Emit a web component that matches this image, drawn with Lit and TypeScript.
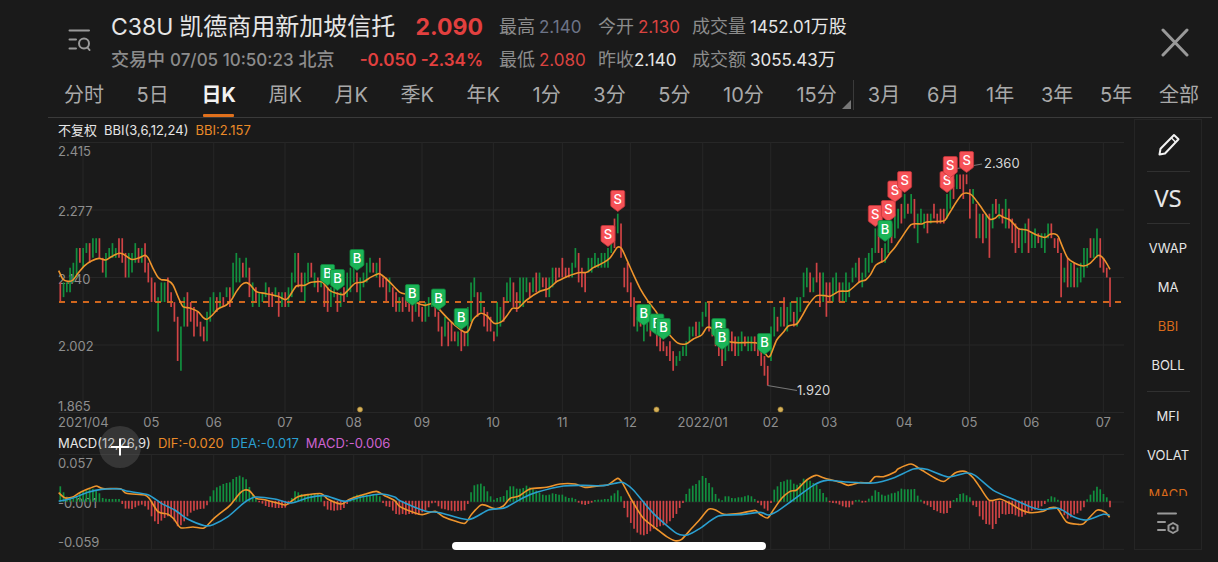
import { LitElement, html, svg, css } from "lit";
import { customElement, state } from "lit/decorators.js";

type Point = [number, number];

/* ---------- chart geometry ---------- */
const FIRST_X = 60.3;
const STEP = 3.26;
const barX = (i: number) => FIRST_X + STEP * i;
/* prices are stored in cents above 2.00 */
const priceY = (cents: number) => 277.5 + (14 - cents) * 4.91;
const MACD_ZERO = 501.3;

/* g = up, r = down; high,low in cents above 2.00 */
const CANDLES = `
r13,9 g13,10 g13,11 g16,11 g17,13 g20,14 r20,17 g20,16 g21,19 r21,17 g22,18 g22,19 r22,18 r18,15 g19,14 g20,18
g21,18 g20,18 r22,18 r22,17 r19,14 g19,14 g19,15 g21,17 r20,17 g20,17 r21,15 r17,13 r14,9 r13,9 g10,3 g13,9
g13,9 r14,9 r11,8 r9,5 r6,-3 g4,-5 g10,4 r11,4 r9,5 r8,2 r7,4 r5,2 r4,1 g7,1 g10,5 g11,7 r10,7 g11,8 r10,8
g12,10 r12,8 g17,10 g19,13 g18,13 r17,14 g18,14 r16,10 g13,8 r12,9 g11,8 g11,9 g13,10 r12,8 r11,8 g12,10 r11,6
g11,8 r11,8 g12,8 g15,10 g19,13 r19,12 r15,11 g15,9 g17,13 r17,14 g15,12 r14,11 g14,12 r13,8 r12,7 g12,8 g12,10
r11,7 g11,8 r12,9 g15,10 g16,11 g17,13 r15,11 g14,9 g15,12 g17,13 g18,15 r17,15 g17,14 r18,12 r14,12 r14,9
g14,11 r12,8 r11,7 g10,7 r10,7 r11,8 r10,7 r9,5 g9,7 r9,6 r8,5 g9,5 g10,6 g11,8 r9,6 r7,3 r4,0 g6,2 r5,0 r5,1
r3,1 g3,0 r4,-1 r3,0 g8,0 g13,5 g14,10 r11,6 g11,7 r8,4 r7,3 r6,3 r3,1 g9,2 g8,4 r10,5 g13,9 g14,9 r13,8 r11,7
g14,8 g14,8 g14,11 r13,10 g14,11 r15,11 g15,11 r14,12 r14,10 g14,10 g16,12 r16,13 r16,14 r18,14 r16,14 r16,14
g17,14 g20,16 r19,13 r16,12 r15,11 g18,15 g18,15 g19,16 g18,16 g19,16 g19,16 g20,16 g21,19 r26,20 g27,23 r25,18
r16,12 r17,11 r13,8 r10,4 g6,3 r6,4 g5,1 g5,3 r6,2 r5,3 r3,0 r2,-1 r1,-1 r0,-2 r1,-3 r-1,-5 g-2,-4 g-1,-3 g0,-2
g1,-2 g4,1 g4,2 r5,2 g5,2 g7,4 g9,6 r9,3 r4,2 r3,0 r2,-2 r0,-4 g0,-3 g3,-1 r3,-1 r2,-2 g2,-2 g3,-1 r2,0 g2,-1
g2,-1 r2,-1 r1,-2 r0,-4 r-2,-6 r-4,-8 g4,-3 g8,2 r6,3 g8,4 r10,4 g8,3 g9,5 r7,4 g10,4 g10,7 g15,10 g16,12 r15,11
g14,11 r17,13 r15,8 g15,9 r13,6 r13,9 g14,9 g15,11 r13,9 g13,9 g15,9 g13,10 g16,13 g17,14 r18,13 g15,12 g18,14
g19,15 g20,17 g24,19 r24,19 r20,17 g21,17 g23,19 r25,21 g27,22 g28,24 r29,25 g31,26 r29,27 g31,27 r30,24 g27,21
g28,25 g27,24 r27,23 g27,25 r29,26 r27,25 r28,25 r28,25 g31,26 g32,28 r34,30 g35,32 r35,32 r35,30 r35,33 r32,26
g32,29 r29,22 g27,22 r27,21 g27,22 r27,18 g29,24 r30,27 g29,26 r28,25 g30,24 r28,24 r26,21 r25,19 r24,20 g24,19
g25,21 r26,19 g23,20 g24,20 r23,21 g23,20 g23,19 g25,22 r25,22 r22,20 r22,19 r19,10 g16,13 r18,12 g17,12 r17,12
g16,12 g17,13 g20,14 g20,16 r22,18 g22,18 g24,18 r22,16 r18,15 r16,14 r14,8`
  .trim().split(/\s+/)
  .map((s) => {
    const [high, low] = s.slice(1).split(",").map(Number);
    return { up: s[0] === "g", high, low };
  });

/* MACD histogram, in thirds of a pixel */
const HISTOGRAM = `
45 27 14 10 12 16 24 30 33 36 38 33 24 10 8 7 7 7 7 -8 -22 -22 -23 -18 -13 -10 -15 -25 -45 -60 -68 -58 -50 -45 -48
-60 -75 -72 -60 -45 -34 -28 -25 -23 -22 -12 15 33 42 47 52 55 57 67 73 77 72 66 43 20 8 -3 -7 -14 -17 -18 -20 -20
-20 -19 -10 10 30 27 22 20 22 22 24 24 15 -15 -25 -27 -28 -27 -26 -20 -8 7 15 20 20 22 20 19 22 20 15 -5 -15 -17
-28 -38 -40 -38 -40 -38 -38 -40 -41 -33 -28 -18 -6 -4 -15 -22 -24 -27 -28 -30 -29 -28 -27 -8 27 48 51 53 45 30 15
5 10 13 16 33 45 45 38 38 40 47 42 36 32 26 20 18 20 24 22 20 20 14 10 11 7 -4 -9 -11 -8 -4 4 5 5 7 7 17 24 33 15
-20 -48 -65 -82 -94 -100 -102 -98 -90 -82 -78 -75 -72 -67 -60 -50 -38 -20 -5 22 38 47 52 63 76 70 55 42 22 8 3 15
15 10 9 12 12 15 18 15 7 -4 -12 -22 -28 -5 35 45 58 60 65 65 53 50 55 68 65 62 55 50 37 25 12 -3 -5 -6 -10 -15 -18
-18 -10 4 5 -4 -3 8 17 33 28 20 17 20 24 26 30 38 36 36 36 37 17 5 -7 -12 -17 -26 -30 -35 -37 -35 -20 4 10 22 24
18 12 -12 -17 -45 -55 -68 -70 -83 -68 -50 -38 -40 -38 -38 -42 -46 -46 -40 -35 -28 -25 -20 -15 -8 7 15 12 5 -28 -42
-52 -48 -40 -36 -28 -18 6 20 32 44 36 22 12 -18`
  .trim().split(/\s+/).map(Number);

/* A stretch of a curve: an origin, then points in thirds of a pixel from it */
const stretch = (ox: number, oy: number, data: string): Point[] =>
  data.trim().split(/\s+/).map((p) => {
    const [x, y] = p.split(",").map(Number);
    return [ox + x / 3, oy + y / 3] as Point;
  });

const BBI: Point[] = [
  ...stretch(48, 220, `32,152 45,178 60,184 75,180 90,160 110,137 130,123 153,115 173,120 190,110 213,100 225,102
    250,118 272,114 290,106 300,113 315,145 330,172 340,179 358,181 375,195 390,230 405,260 425,264 450,275 465,292
    476,298 490,288 510,267 535,255 550,240 565,215 580,195 594,188 606,194 625,215 655,221 690,229 712,239 725,228
    745,198 770,196 785,188`),
  ...stretch(310, 180, `10,306 37,306 60,332 97,344 110,335 135,310 160,306 180,293 205,281 215,285 240,307 270,337
    300,346 320,368 345,376 370,370 385,385 410,412 440,440 465,457 477,450 490,418 512,400 530,407 552,430 575,425
    590,408 607,385 625,384 650,360 690,334 715,326 740,305`),
  ...stretch(560, 180, `0,300 25,288 55,278 80,277 100,263 130,248 150,234 172,202 185,206 200,238 220,283 240,325
    265,365 290,398 310,440 335,472 355,490 380,491 400,477 425,465 440,443 455,445 475,465 500,483 530,488 590,489
    610,512 623,530 632,525 650,480 670,457 685,438 710,432 725,410 745,375 770,347 795,347`),
  ...stretch(800, 140, `90,469 118,454 147,452 178,426 197,420 212,403 228,375 255,360 268,342
    285,322 300,300 333,254 365,252 380,246 430,243 442,230 465,192 485,164 499,159 515,165 535,190 558,223 570,238
    585,235 597,225 610,232 630,240 655,266 680,270 710,285 735,292 750,283 765,282 775,290 788,322 803,354 825,370
    850,378 870,370 893,347 905,350 920,370 930,388`),
];

const DIF: Point[] = [
  ...stretch(48, 400, `32,278 50,293 72,292 95,278 125,265 145,258 165,266 217,266 235,280 290,285 305,297 330,335
    360,343 378,357 398,383 435,381 468,384 495,358 520,337 545,317 575,280 590,270 605,273 625,295 650,299 685,308
    712,315 735,300 750,290 780,284 820,281 840,298 880,312 905,298 950,283 985,274 1010,287 1040,302`),
  ...stretch(400, 400, `0,320 40,337 67,344 105,334 130,350 165,363 195,370 215,343 245,314 285,326 310,318 330,295
    355,289 390,267 440,262 480,252 525,252 555,262 600,257 625,254 653,235 668,250 695,300 730,355 770,387 800,410
    825,422 845,418 875,385 900,358 925,328 945,329 972,343 1020,340 1065,331`),
  ...stretch(760, 400, `0,343 23,354 40,330 65,295 90,274 110,270 140,240 168,226 190,233 240,247 265,256 300,248
    328,248 345,230 370,230 405,216 415,206 453,192 480,207 530,237 553,244 585,219 600,214 618,215 640,234 660,262
    688,301 720,297 750,310 780,328 808,338 850,334 870,323 892,325 920,366 955,373 972,370 1010,331 1035,336
    1049,352`),
];

const DEA: Point[] = [
  ...stretch(48, 400, `32,304 75,294 120,277 160,268 215,267 240,274 300,284 340,310 380,330 420,358 470,377 495,374
    540,350 580,315 600,300 625,291 680,297 730,309 780,293 830,287 890,304 940,291 1000,282 1040,291`),
  ...stretch(400, 400, `0,302 75,333 120,338 205,359 265,330 315,323 370,293 410,277 490,258 550,256 610,257 660,247
    675,250 700,270 760,340 830,400 865,404 900,385 955,348 1020,344`),
  ...stretch(760, 400, `0,337 25,345 50,335 95,303 160,256 200,241 260,246 340,249 400,234 460,207 500,208 565,231
    618,219 645,226 700,271 760,298 810,320 845,329 895,325 940,350 980,360 1030,343 1049,346`),
];

/* Rounded path through every point */
function curve(points: Point[]): string {
  let d = `M${points[0][0]} ${points[0][1]}`;
  for (let i = 0; i < points.length - 1; i++) {
    const a = points[Math.max(i - 1, 0)];
    const b = points[i];
    const c = points[i + 1];
    const e = points[Math.min(i + 2, points.length - 1)];
    const k = 8;
    d += `C${b[0] + (c[0] - a[0]) / k} ${b[1] + (c[1] - a[1]) / k} ${c[0] - (e[0] - b[0]) / k} ${c[1] - (e[1] - b[1]) / k} ${c[0]} ${c[1]}`;
  }
  return d;
}

const MONTHS: [number, string][] = [
  [83, "2021/04"], [151.3, "05"], [213.7, "06"], [285, "07"], [353.7, "08"], [422, "09"], [493.3, "10"],
  [562.3, "11"], [630.3, "12"], [702.7, "2022/01"], [770.7, "02"], [829.3, "03"], [904.3, "04"], [969.3, "05"],
  [1031.3, "06"], [1103.3, "07"],
];

/* trade marks: bar index, top edge, side */
const TRADES: [number, number, "B" | "S"][] = [
  [82, 264, "B"], [85, 269, "B"], [91, 249, "B"], [108, 284, "B"], [116, 288.5, "B"], [123, 308, "B"],
  [168, 225, "S"], [171, 190, "S"], [179, 304, "B"], [183, 313.5, "B"], [185, 318, "B"], [202, 318, "B"],
  [203, 328, "B"], [216, 333, "B"], [250, 205, "S"], [254, 200, "S"], [253, 220, "B"], [256, 180.5, "S"],
  [259, 171, "S"], [272, 171, "S"], [273, 156, "S"], [278, 151, "S"],
];

@customElement("price-chart")
class PriceChart extends LitElement {
  static styles = css`
    :host { display: block; }
    svg { display: block; width: 100%; height: auto; }
    .grid { stroke: #272727; stroke-width: 1; }
    .axis { fill: #8e8e8e; font-size: 13px; }
    .middle { text-anchor: middle; }
    .candle { stroke-width: 1.7; }
    .up { stroke: #12903f; }
    .down { stroke: #d04345; }
    .last { stroke: #d0661d; stroke-width: 1.8; stroke-dasharray: 6 6; }
    .bbi { fill: none; stroke: #ee942c; stroke-width: 1.6; }
    .leader { stroke: #777; stroke-width: 1.2; }
    .extreme { fill: #d6d6d6; font-size: 13px; }
    .event { fill: #d6b15a; stroke: #94752c; stroke-width: 0.6; }
    .buy { fill: #1bb457; stroke: #12843e; stroke-width: 0.8; }
    .sell { fill: #f65257; stroke: #c33539; stroke-width: 0.8; }
    .mark { fill: #fff; font-size: 13px; font-weight: 500; text-anchor: middle; }
  `;

  render() {
    return html`<svg viewBox="48 142 1086 290" role="img" aria-label="日K 价格图">
      ${[142.5, 210, 277.5, 345, 412.5].map((y) => svg`<line class="grid" x1="59" x2="1124" y1=${y} y2=${y} />`)}
      ${MONTHS.map(([x]) => svg`<line class="grid" x1=${x} x2=${x} y1="142" y2="412" />`)}
      ${[["2.415", 156], ["2.277", 216], ["2.140", 284], ["2.002", 351], ["1.865", 411]].map(
        ([t, y]) => svg`<text class="axis" x="58" y=${y}>${t}</text>`)}
      ${MONTHS.map(([x, t], i) => svg`<text class=${i ? "axis middle" : "axis"} x=${i ? x : 58} y="427">${t}</text>`)}
      ${CANDLES.map((c, i) => svg`<line class="candle ${c.up ? "up" : "down"}" x1=${barX(i)} x2=${barX(i)}
        y1=${priceY(c.high)} y2=${priceY(c.low)} />`)}
      <line class="last" x1="59" x2="1121" y1="302" y2="302" />
      <path class="bbi" d=${curve(BBI)} />
      <line class="leader" x1="957" y1="168.5" x2="982" y2="164" />
      <text class="extreme" x="984" y="168">2.360</text>
      <line class="leader" x1="767.5" y1="385.5" x2="797" y2="390.5" />
      <text class="extreme" x="797" y="395">1.920</text>
      ${[360, 656.5, 780.5].map((x) => svg`<circle class="event" cx=${x} cy="409.5" r="2.6" />`)}
      ${TRADES.map(([i, y, side]) => svg`<g transform="translate(${barX(i)} ${y})">
        <path class=${side === "B" ? "buy" : "sell"}
          d="M-5.5 0.5h11a1.5 1.5 0 0 1 1.5 1.5v13.5a1.5 1.5 0 0 1-.6 1.2L0 21.5l-6.4-4.8a1.5 1.5 0 0 1-.6-1.2V2a1.5 1.5 0 0 1 1.5-1.5z" />
        <text class="mark" y="14">${side}</text>
      </g>`)}
    </svg>`;
  }
}

@customElement("macd-chart")
class MacdChart extends LitElement {
  static styles = css`
    :host { display: block; }
    svg { display: block; width: 100%; height: auto; }
    .grid { stroke: #272727; stroke-width: 1; }
    .axis { fill: #8e8e8e; font-size: 13px; }
    .bar { stroke-width: 1.7; }
    .up { stroke: #12903f; }
    .down { stroke: #d04345; }
    .dif { fill: none; stroke: #ee942c; stroke-width: 1.6; }
    .dea { fill: none; stroke: #2a9fd0; stroke-width: 1.6; }
  `;

  render() {
    return html`<svg viewBox="48 454 1086 96" role="img" aria-label="MACD">
      ${[454.5, 502, 549.3].map((y) => svg`<line class="grid" x1="59" x2="1124" y1=${y} y2=${y} />`)}
      ${MONTHS.map(([x]) => svg`<line class="grid" x1=${x} x2=${x} y1="454" y2="549" />`)}
      ${[["0.057", 468], ["-0.001", 508], ["-0.059", 547]].map(
        ([t, y]) => svg`<text class="axis" x="58" y=${y}>${t}</text>`)}
      ${HISTOGRAM.map((v, i) => svg`<line class="bar ${v > 0 ? "up" : "down"}" x1=${barX(i)} x2=${barX(i)}
        y1=${MACD_ZERO + (v > 0 ? 0.5 : -0.5)} y2=${MACD_ZERO - v / 3} />`)}
      <path class="dif" d=${curve(DIF)} />
      <path class="dea" d=${curve(DEA)} />
    </svg>`;
  }
}

@customElement("app-root")
class AppRoot extends LitElement {
  @state() private period = "日K";

  static styles = css`
    :host {
      display: flex;
      flex-direction: column;
      position: relative;
      min-height: 100vh;
      box-sizing: border-box;
      background: #1a1a1a;
      color: #e6e6e6;
      font-family: Inter, "Noto Sans CJK SC", sans-serif;
      overflow: hidden;
    }
    button {
      margin: 0;
      padding: 0;
      border: 0;
      background: none;
      color: inherit;
      font: inherit;
      cursor: pointer;
      white-space: nowrap;
    }
    svg { display: block; }
    .line { fill: none; stroke: #999; stroke-width: 2; stroke-linecap: round; stroke-linejoin: round; }
    .heavy { stroke-width: 3; }

    .header {
      display: flex;
      align-items: flex-start;
      padding: 10px 28px 0 67px;
      height: 68px;
      white-space: nowrap;
    }
    .corner { margin-top: 17px; }
    .summary { width: 372px; margin-left: 20px; }
    .row {
      display: flex;
      align-items: center;
      justify-content: space-between;
      height: 33px;
    }
    .title { display: flex; align-items: baseline; gap: 6px; margin: 0; font-size: 24px; line-height: 33px; font-weight: 400; }
    .code { font-size: 23px; }
    .price { color: #e2403f; font-size: 23px; font-weight: 700; }
    .status { display: flex; align-items: baseline; gap: 5px; color: #8c8c8c; font-size: 17px; line-height: 33px; font-weight: 500; }
    .zh { font-size: 18px; }
    .change { color: #e2403f; font-size: 17px; font-weight: 600; }
    .stats {
      display: grid;
      grid-template-columns: 83px 78px auto;
      column-gap: 16px;
      margin: 0 auto 0 16px;
      font-size: 17px;
      line-height: 33px;
    }
    .stat { display: flex; align-items: baseline; gap: 4px; height: 33px; }
    .label { color: #8c8c8c; font-size: 18px; }
    .slate { color: #6d7488; }
    .red { color: #d94340; }
    .tight { gap: 0; }

    .tabs {
      display: flex;
      margin: 0 6px 0 48px;
      padding: 0 13px 0 16px;
      border-bottom: 1px solid #3a3a3a;
      color: #a9a9a9;
      font-size: 20px;
    }
    .group { display: flex; justify-content: space-between; }
    .minutes { flex: 7; }
    .years { flex: 3; }
    .more {
      position: relative;
      width: 17px;
      height: 30px;
      margin: 2px 14px 0 0;
      border-right: 1px solid #3a3a3a;
    }
    .more svg { position: absolute; right: 2px; bottom: 1px; }
    .tab { position: relative; height: 39px; padding-bottom: 4px; line-height: 35px; }
    .tab.active { color: #f2f2f2; font-weight: 700; }
    .tab.active::after {
      content: "";
      position: absolute;
      left: 2px;
      right: 2px;
      bottom: 0;
      height: 3px;
      border-radius: 1px;
      background: #e0701c;
    }

    .main { display: flex; flex: 1; align-items: flex-start; padding: 0 16px 0 48px; }
    .charts { flex: 1; min-width: 0; }
    .legend { display: flex; align-items: center; gap: 7px; height: 24px; padding-left: 10px; font-size: 13px; line-height: 20px; white-space: nowrap; }
    .legend.lower { position: relative; height: 22px; }
    .orange { color: #ea8a28; }
    .blue { color: #2a9fd0; }
    .violet { color: #cd62cf; }
    .cross {
      position: absolute;
      left: 51px;
      top: -6px;
      width: 42px;
      height: 42px;
      border-radius: 50%;
      background: rgba(120, 120, 120, 0.3);
    }

    .side {
      display: flex;
      flex-direction: column;
      align-items: center;
      box-sizing: border-box;
      width: 68px;
      height: 431px;
      margin-top: 1px;
      border: 1px solid #252525;
      font-size: 13px;
    }
    .side hr { width: 43px; margin: 0; border: 0; border-top: 1px solid #303030; }
    .tool { display: grid; place-items: center; width: 100%; height: 51px; flex: none; }
    .versus { font-family: "Noto Sans", sans-serif; font-size: 24px; }
    .list { display: flex; flex-direction: column; align-items: center; height: 272px; overflow: hidden; width: 100%; }
    .set { display: flex; flex-direction: column; width: 100%; padding: 4px 0 7px; }
    .indicator { height: 39px; flex: none; }
    .indicator.on { color: #d96a1b; }
    .home {
      position: absolute;
      left: 50%;
      bottom: 12px;
      width: 314px;
      height: 8px;
      margin-left: -157px;
      border-radius: 4px;
      background: #fff;
    }
  `;

  private tab(name: string) {
    return html`<button class="tab ${this.period === name ? "active" : ""}" @click=${() => (this.period = name)}>${name}</button>`;
  }

  private indicator(name: string, on = false) {
    return html`<button class="indicator ${on ? "on" : ""}">${name}</button>`;
  }

  render() {
    return html`
      <header class="header">
        <button class="corner" aria-label="搜索列表">
          <svg width="24" height="24" viewBox="0 0 24 24">
            <path class="line" d="M2.5 3.5H22M2.5 12.500H9M2.5 21.500H9" />
            <circle class="line" cx="17" cy="16.500" r="5" />
            <path class="line" d="M20.500 20.500L22.500 23" />
          </svg>
        </button>
        <div class="summary">
          <div class="row">
            <h1 class="title"><span class="code">C38U</span><span>凯德商用新加坡信托</span></h1>
            <span class="price">2.090</span>
          </div>
          <div class="row">
            <span class="status"><span class="zh">交易中</span><span>07/05 10:50:23</span><span class="zh">北京</span></span>
            <span class="change">-0.050 -2.34%</span>
          </div>
        </div>
        <div class="stats">
          <span class="stat"><span class="label">最高</span><span class="slate">2.140</span></span>
          <span class="stat"><span class="label">今开</span><span class="red">2.130</span></span>
          <span class="stat"><span class="label">成交量</span><span>1452.01<span class="zh">万股</span></span></span>
          <span class="stat"><span class="label">最低</span><span class="red">2.080</span></span>
          <span class="stat tight"><span class="label">昨收</span><span>2.140</span></span>
          <span class="stat"><span class="label">成交额</span><span>3055.43<span class="zh">万</span></span></span>
        </div>
        <button class="corner" aria-label="关闭">
          <svg width="30" height="30" viewBox="0 0 30 30">
            <path class="line heavy" d="M3 3L27 28M27 3L3 28" />
          </svg>
        </button>
      </header>

      <nav class="tabs">
        <div class="group minutes">
          ${["分时", "5日", "日K", "周K", "月K", "季K", "年K", "1分", "3分", "5分", "10分", "15分"].map((t) => this.tab(t))}
        </div>
        <button class="more" aria-label="更多周期">
          <svg width="9" height="9" viewBox="0 0 9 9"><path d="M9 0V9H0z" fill="#777" /></svg>
        </button>
        <div class="group years">${["3月", "6月", "1年", "3年", "5年", "全部"].map((t) => this.tab(t))}</div>
      </nav>

      <main class="main">
        <section class="charts">
          <div class="legend">
            <span>不复权</span><span>BBI(3,6,12,24)</span><span class="orange">BBI:2.157</span>
          </div>
          <price-chart></price-chart>
          <div class="legend lower">
            <span>MACD(12,26,9)</span><span class="orange">DIF:-0.020</span>
            <span class="blue">DEA:-0.017</span><span class="violet">MACD:-0.006</span>
            <button class="cross" aria-label="十字光标">
              <svg width="42" height="42" viewBox="0 0 42 42">
                <path d="M12 21H30M21 12.500V29.500" stroke="#fff" stroke-width="2" />
              </svg>
            </button>
          </div>
          <macd-chart></macd-chart>
        </section>

        <aside class="side">
          <button class="tool" aria-label="画线">
            <svg width="24" height="26" viewBox="0 0 24 26">
              <path d="M3.500 21.500L4.500 15.800L18 2L22.500 6.300L9 20.500z" fill="none" stroke="#f2f2f2" stroke-width="2" stroke-linejoin="round" />
              <path d="M15.500 5L19.500 9" stroke="#f2f2f2" stroke-width="1.500" />
            </svg>
          </button>
          <hr />
          <button class="tool versus">VS</button>
          <hr />
          <div class="list">
            <div class="set">
              ${this.indicator("VWAP")} ${this.indicator("MA")} ${this.indicator("BBI", true)} ${this.indicator("BOLL")}
            </div>
            <hr />
            <div class="set">
              ${this.indicator("MFI")} ${this.indicator("VOLAT")} ${this.indicator("MACD", true)}
            </div>
          </div>
          <button class="tool" aria-label="指标设置">
            <svg width="24" height="24" viewBox="0 0 24 24">
              <path class="line" d="M2 3.500H20M2 12H9M2 20H9" />
              <path class="line" d="M17 13L21.500 15.500V20.500L17 23L12.500 20.500V15.500z" />
              <circle cx="17" cy="18" r="1.600" fill="#999" />
            </svg>
          </button>
        </aside>
      </main>
      <div class="home"></div>
    `;
  }
}
